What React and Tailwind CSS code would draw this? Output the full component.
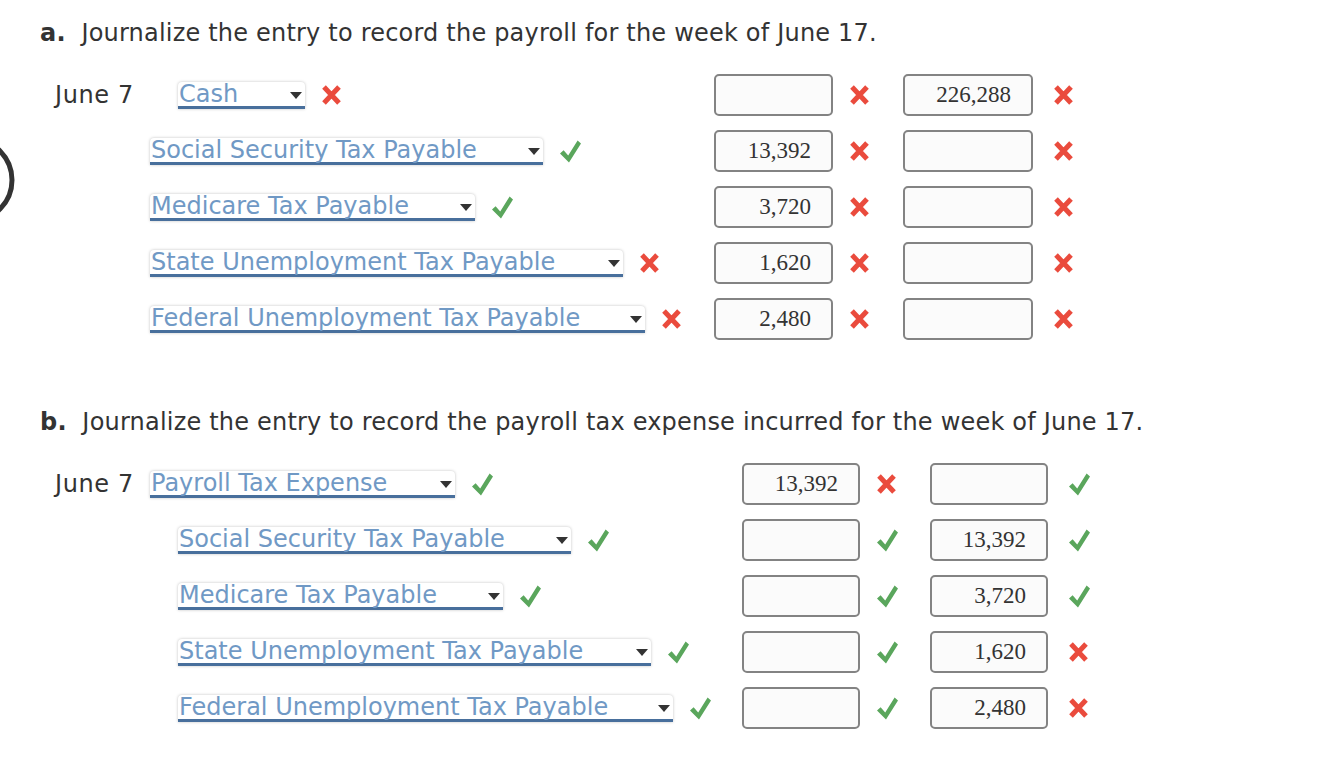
import React from 'react';

const Check = () => (
  <svg width="21" height="23" viewBox="0 0 21 23" className="shrink-0">
    <path d="M0 13.5 L3.6 10.2 L8.2 15.6 L17.6 0.6 L21 3.4 L9 22.6 Z" fill="#5aa65c" />
  </svg>
);

const Cross = () => (
  <svg width="19" height="20" viewBox="0 0 19 20" className="shrink-0">
    <path d="M2 2 L17 18 M17 2 L2 18" stroke="#ea4b3d" strokeWidth="5" />
  </svg>
);

const Mark = ({ ok }) => (ok ? <Check /> : <Cross />);

const AccountSelect = ({ label, width }) => (
  <div
    className="relative h-[27px] bg-white rounded-t-[4px] border-b-[3px] border-[#486f9c] shadow-[0_0_3px_rgba(0,0,0,0.25)] shrink-0"
    style={{ width }}
  >
    <span className="absolute left-[1px] bottom-[-2px] text-[24px] leading-[27px] text-[#7099c5] whitespace-nowrap">
      {label}
    </span>
    <svg width="12" height="7" viewBox="0 0 12 7" className="absolute right-[3px] top-[10px]">
      <path d="M0 0 L12 0 L6 7 Z" fill="#333" />
    </svg>
  </div>
);

const AmountBox = ({ value, width }) => (
  <div
    className="h-[42px] border-2 border-[#838383] rounded-[5px] bg-[#fbfbfb] flex items-center justify-end pr-[20px] shrink-0 text-[23px] text-[#333]"
    style={{ width, fontFamily: '"Liberation Serif", "Times New Roman", serif' }}
  >
    {value}
  </div>
);

const Row = ({ date, indent, acct, acctW, acctOk, accountCol, debit, debitOk, credit, creditOk, debitW, creditW }) => (
  <div className="flex items-center h-[56px]">
    <div className="w-[95px] shrink-0 text-[24px] tracking-[0.6px] text-[#333]">{date}</div>
    <div className="flex items-center shrink-0" style={{ width: accountCol, paddingLeft: indent ? 28 : 0 }}>
      <AccountSelect label={acct} width={acctW} />
      <div className="ml-[17px]">
        <Mark ok={acctOk} />
      </div>
    </div>
    <AmountBox value={debit} width={debitW} />
    <div className="w-[70px] shrink-0 pl-[17px] flex items-center">
      <Mark ok={debitOk} />
    </div>
    <AmountBox value={credit} width={creditW} />
    <div className="pl-[21px] flex items-center">
      <Mark ok={creditOk} />
    </div>
  </div>
);

const partA = [
  { date: 'June 7', indent: true, acct: 'Cash', acctW: 127, acctOk: false, debit: '', debitOk: false, credit: '226,288', creditOk: false },
  { acct: 'Social Security Tax Payable', acctW: 393, acctOk: true, debit: '13,392', debitOk: false, credit: '', creditOk: false },
  { acct: 'Medicare Tax Payable', acctW: 325, acctOk: true, debit: '3,720', debitOk: false, credit: '', creditOk: false },
  { acct: 'State Unemployment Tax Payable', acctW: 473, acctOk: false, debit: '1,620', debitOk: false, credit: '', creditOk: false },
  { acct: 'Federal Unemployment Tax Payable', acctW: 495, acctOk: false, debit: '2,480', debitOk: false, credit: '', creditOk: false },
];

const partB = [
  { date: 'June 7', acct: 'Payroll Tax Expense', acctW: 305, acctOk: true, debit: '13,392', debitOk: false, credit: '', creditOk: true },
  { indent: true, acct: 'Social Security Tax Payable', acctW: 393, acctOk: true, debit: '', debitOk: true, credit: '13,392', creditOk: true },
  { indent: true, acct: 'Medicare Tax Payable', acctW: 325, acctOk: true, debit: '', debitOk: true, credit: '3,720', creditOk: true },
  { indent: true, acct: 'State Unemployment Tax Payable', acctW: 473, acctOk: true, debit: '', debitOk: true, credit: '1,620', creditOk: false },
  { indent: true, acct: 'Federal Unemployment Tax Payable', acctW: 495, acctOk: true, debit: '', debitOk: true, credit: '2,480', creditOk: false },
];

export default function App() {
  return (
    <div
      className="relative w-[1324px] h-[778px] bg-white overflow-hidden text-[#333]"
      style={{ fontFamily: '"DejaVu Sans", Verdana, sans-serif' }}
    >
      {/* cropped circle at left edge */}
      <svg width="20" height="80" viewBox="0 0 20 80" className="absolute left-0 top-[140px]">
        <circle cx="-29" cy="40" r="41" fill="none" stroke="#333" strokeWidth="5" />
      </svg>

      <div className="pl-[40px] pt-[18px]">
        <h2 className="text-[24px] leading-[30px] tracking-[0.2px] font-normal">
          <span className="font-bold">a.</span>&nbsp; Journalize the entry to record the payroll for the week of June 17.
        </h2>
        <div className="pl-[15px] mt-[19px]">
          {partA.map((r, i) => (
            <Row key={i} {...r} accountCol={564} debitW={119} creditW={130} />
          ))}
        </div>

        <h2 className="text-[24px] leading-[30px] tracking-[0.2px] font-normal mt-[60px]">
          <span className="font-bold">b.</span>&nbsp; Journalize the entry to record the payroll tax expense incurred for the week of June 17.
        </h2>
        <div className="pl-[15px] mt-[19px]">
          {partB.map((r, i) => (
            <Row key={i} {...r} accountCol={592} debitW={118} creditW={118} />
          ))}
        </div>
      </div>
    </div>
  );
}
